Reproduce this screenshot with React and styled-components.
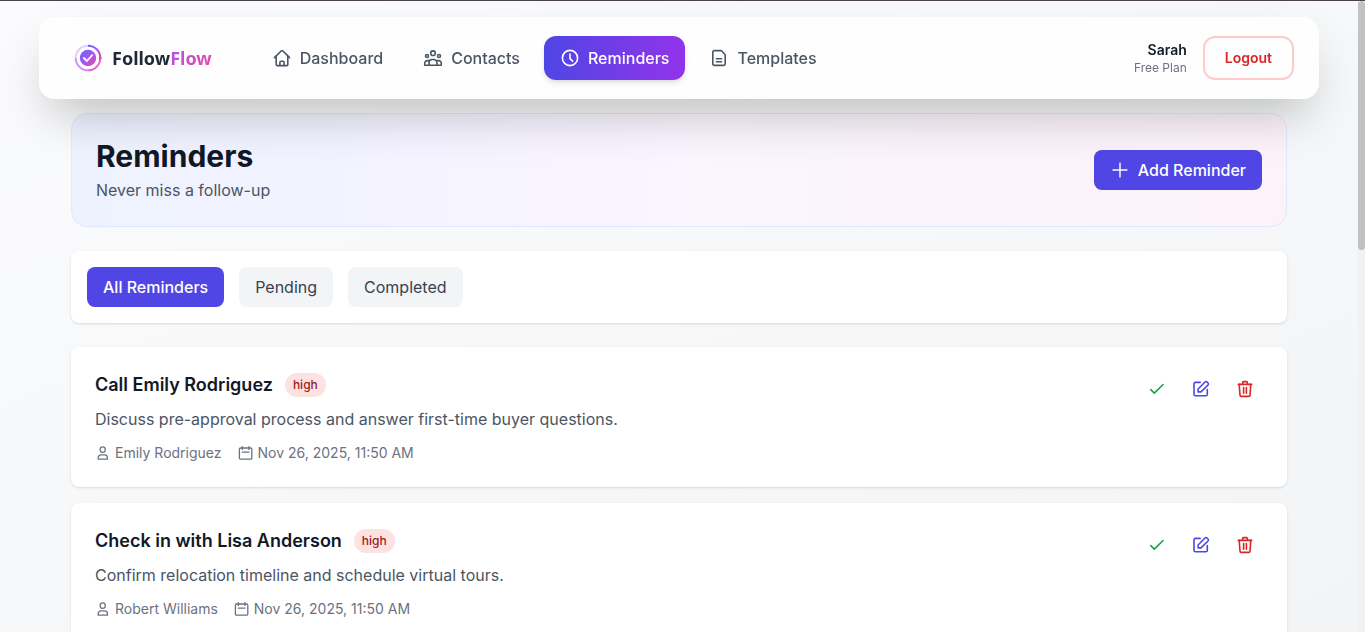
import React, { useState } from 'react';
import styled, { createGlobalStyle, css, ThemeProvider } from 'styled-components';

const theme = {
  font: "Inter, 'Liberation Sans', sans-serif",
  clr: {
    primary: '#4f46e5',
    purple: '#9333ea',
    danger: '#dc2626',
    success: '#16a34a',
    gray: {
      100: '#f3f4f6',
      500: '#6b7280',
      600: '#4b5563',
      700: '#374151',
      900: '#111827',
    },
  },
};

const GlobalStyle = createGlobalStyle`
  *,
  *::before,
  *::after {
    box-sizing: border-box;
  }

  body {
    margin: 0;
    font-family: ${theme.font};
    font-size: 16px;
    line-height: 24px;
    color: ${theme.clr.gray[900]};
    -webkit-font-smoothing: antialiased;
  }

  h1, h2, p, ul {
    margin: 0;
    padding: 0;
  }

  button {
    font-family: inherit;
    cursor: pointer;
  }
`;

/* Layout */

const Screen = styled.div`
  display: flex;
  height: 100vh;
  overflow: hidden;
  border-top: 1px solid #4b404e;
  background: linear-gradient(to bottom right, #fbfbfd, #f8f9fb 30%, #f3f4f6);
`;

const Viewport = styled.div`
  flex: 1;
  min-width: 0;
  overflow-y: auto;
  scrollbar-width: none;
`;

const ScrollTrack = styled.div`
  width: 7px;
  background-color: #f1f1f1;
`;

const ScrollThumb = styled.div`
  height: 249px;
  border-radius: 4px;
  background-color: #c1c1c1;
`;

const Main = styled.main`
  display: flex;
  flex-direction: column;
  gap: 24px;
  max-width: 1280px;
  margin: 0 auto;
  padding: 14px 32px 32px;
`;

/* Header */

const Header = styled.header`
  position: relative;
  z-index: 1;
  display: flex;
  align-items: center;
  gap: 44px;
  max-width: 1280px;
  margin: 16px auto 0;
  padding: 16px 24px;
  border: 1px solid rgba(255, 255, 255, 0.2);
  border-radius: 16px;
  background-color: rgba(255, 255, 255, 0.8);
  box-shadow: 0 25px 50px -12px rgba(0, 0, 0, 0.25);
  backdrop-filter: blur(24px);
`;

const Brand = styled.a`
  display: flex;
  align-items: center;
  font-family: 'Noto Sans', 'Open Sans', sans-serif;
  font-size: 18px;
  font-weight: 700;
  color: #1f2937;
  text-decoration: none;
`;

const BrandAccent = styled.span`
  background: linear-gradient(to bottom right, #a855f7, #ec4899);
  background-clip: text;
  color: transparent;
`;

const Nav = styled.nav`
  display: flex;
  flex: 1;
  gap: 8px;
`;

const NavLink = styled.a`
  display: flex;
  align-items: center;
  gap: 8px;
  padding: 10px 16px;
  border-radius: 12px;
  font-weight: 500;
  color: ${({ theme }) => theme.clr.gray[600]};
  text-decoration: none;

  ${({ $active, theme }) =>
    $active &&
    css`
      color: #fff;
      background: linear-gradient(to right, ${theme.clr.primary}, ${theme.clr.purple});
      box-shadow: 0 4px 6px -1px rgba(0, 0, 0, 0.1), 0 2px 4px -2px rgba(0, 0, 0, 0.1);
    `}
`;

const Account = styled.div`
  display: flex;
  align-items: center;
  gap: 16px;
`;

const User = styled.div`
  text-align: right;
`;

const UserName = styled.p`
  font-size: 14px;
  line-height: 20px;
  font-weight: 600;
`;

const UserPlan = styled.p`
  font-size: 12px;
  line-height: 16px;
  color: ${({ theme }) => theme.clr.gray[500]};
`;

const LogoutButton = styled.button`
  padding: 10px 20px;
  border: 2px solid #fecaca;
  border-radius: 12px;
  background: none;
  font-size: 14px;
  line-height: 20px;
  font-weight: 600;
  color: ${({ theme }) => theme.clr.danger};
`;

/* Page banner */

const Banner = styled.section`
  display: flex;
  align-items: center;
  justify-content: space-between;
  padding: 24px;
  border: 1px solid #e0e7ff;
  border-radius: 16px;
  background: linear-gradient(to right, #eef2ff, #faf5ff, #fdf2f8);
`;

const Title = styled.h1`
  margin-bottom: 4px;
  font-size: 30px;
  line-height: 36px;
  font-weight: 700;
`;

const Subtitle = styled.p`
  color: ${({ theme }) => theme.clr.gray[600]};
`;

const Button = styled.button`
  display: flex;
  align-items: center;
  gap: 8px;
  padding: 8px 16px;
  border: 0;
  border-radius: 8px;
  font-size: 16px;
  line-height: 24px;
  font-weight: ${({ $muted }) => ($muted ? 400 : 500)};
  color: ${({ $muted, theme }) => ($muted ? theme.clr.gray[700] : '#fff')};
  background-color: ${({ $muted, theme }) => ($muted ? theme.clr.gray[100] : theme.clr.primary)};
`;

/* Cards */

const cardStyles = css`
  border-radius: 8px;
  background-color: #fff;
  box-shadow: 0 1px 3px rgba(0, 0, 0, 0.1), 0 1px 2px -1px rgba(0, 0, 0, 0.1);
`;

const Filters = styled.div`
  display: flex;
  gap: 15px;
  padding: 16px;
  ${cardStyles}
`;

const List = styled.ul`
  display: flex;
  flex-direction: column;
  gap: 16px;
  list-style: none;
`;

const Card = styled.li`
  display: flex;
  align-items: flex-start;
  justify-content: space-between;
  padding: 24px;
  ${cardStyles}
`;

const CardHeader = styled.div`
  display: flex;
  align-items: center;
  gap: 12px;
  margin-bottom: 8px;
`;

const CardTitle = styled.h2`
  font-size: 18px;
  line-height: 28px;
  font-weight: 600;
`;

const Badge = styled.span`
  padding: 4px 8px;
  border-radius: 12px;
  font-size: 12px;
  line-height: 16px;
  font-weight: 500;
  color: #991b1b;
  background-color: #fee2e2;
`;

const Description = styled.p`
  margin-bottom: 12px;
  color: ${({ theme }) => theme.clr.gray[600]};
`;

const Meta = styled.div`
  display: flex;
  gap: 16px;
  font-size: 14px;
  line-height: 20px;
  color: ${({ theme }) => theme.clr.gray[500]};
`;

const MetaItem = styled.span`
  display: flex;
  align-items: center;
  gap: 4px;
`;

const Actions = styled.div`
  display: flex;
  gap: 8px;
`;

const IconButton = styled.button`
  display: flex;
  padding: 8px;
  border: 0;
  border-radius: 8px;
  background: none;
  color: ${({ $color, theme }) => theme.clr[$color]};
`;

/* Icons */

const Svg = styled.svg`
  display: block;
  flex-shrink: 0;
  fill: none;
  stroke: currentColor;
  stroke-width: ${({ $stroke }) => $stroke || 1.6};
  stroke-linecap: round;
  stroke-linejoin: round;
`;

const Icon = ({ size = 20, stroke, children }) => (
  <Svg width={size} height={size} viewBox={`0 0 ${size} ${size}`} $stroke={stroke} aria-hidden='true'>
    {children}
  </Svg>
);

const HomeIcon = () => (
  <Icon>
    <path d='M2.4 9.6 9.4 2.8a.9.9 0 0 1 1.2 0l7 6.8' />
    <path d='M4.2 8.2v8.3a1.1 1.1 0 0 0 1.1 1.1h9.4a1.1 1.1 0 0 0 1.1-1.1V8.2' />
    <path d='M7.9 17.4v-2.8a1.3 1.3 0 0 1 1.3-1.3h1.6a1.3 1.3 0 0 1 1.3 1.3v2.8' />
  </Icon>
);

const UsersIcon = () => (
  <Icon>
    <circle cx='10' cy='5.2' r='2.3' />
    <circle cx='4' cy='8' r='1.5' />
    <circle cx='16' cy='8' r='1.5' />
    <path d='M6 17.3v-2.5a3.3 3.3 0 0 1 3.3-3.3h1.4a3.3 3.3 0 0 1 3.3 3.3v2.5z' />
    <path d='M6 17.3H1.7v-2a2.7 2.7 0 0 1 2.7-2.7h1.8M14 17.3h4.3v-2a2.7 2.7 0 0 0-2.7-2.7h-1.8' />
  </Icon>
);

const ClockIcon = () => (
  <Icon>
    <circle cx='10' cy='10' r='7.6' />
    <path d='M10 6v4.2a1 1 0 0 0 .3.7l2.4 2.4' />
  </Icon>
);

const DocumentIcon = () => (
  <Icon>
    <path d='M11.8 2.6H5.4a1.6 1.6 0 0 0-1.6 1.6v11.6a1.6 1.6 0 0 0 1.6 1.6h9.2a1.6 1.6 0 0 0 1.6-1.6V7.2a1.4 1.4 0 0 0-.4-1l-3-3.2a1.4 1.4 0 0 0-1-.4z' />
    <path d='M7.4 10.7h5.2M7.4 13.7h5.2' />
  </Icon>
);

const PlusIcon = () => (
  <Icon stroke={1.4}>
    <path d='M10 3v14M3 10h14' />
  </Icon>
);

const CheckIcon = () => (
  <Icon>
    <path d='m3.8 10.6 3.5 3.5 8.8-8.6' />
  </Icon>
);

const EditIcon = () => (
  <Icon>
    <path d='M9.2 3.4H4.3A1.3 1.3 0 0 0 3 4.7v10.7a1.3 1.3 0 0 0 1.3 1.3H15a1.3 1.3 0 0 0 1.3-1.3v-4.9' />
    <path d='M7.1 12.9V10l6.9-7a1.4 1.4 0 0 1 2 0l1 1a1.4 1.4 0 0 1 0 2L10 12.9z' />
  </Icon>
);

const TrashIcon = () => (
  <Icon>
    <path d='M3.3 5.4h13.4M7.6 5.2V3.5a.9.9 0 0 1 .9-.9h3a.9.9 0 0 1 .9.9v1.7' />
    <path d='m4.2 5.4.8 10.9a1.2 1.2 0 0 0 1.2 1.1h7.6a1.2 1.2 0 0 0 1.2-1.1l.8-10.9M8.6 8.6v5.6M11.4 8.6v5.6' />
  </Icon>
);

const PersonIcon = () => (
  <Icon size={16} stroke={1.3}>
    <rect x='5.2' y='1.8' width='5' height='5.6' rx='2.4' />
    <path d='M3.2 14.2v-1.5a2.8 2.8 0 0 1 2.8-2.8h3.6a2.8 2.8 0 0 1 2.8 2.8v1.5z' />
  </Icon>
);

const CalendarIcon = () => (
  <Icon size={16} stroke={1.3}>
    <rect x='1.4' y='3' width='12.4' height='11.2' rx='1.2' />
    <path d='M4.3 1.6v2.8M10.9 1.6v2.8M4.3 7.2h6.6' />
  </Icon>
);

const Logo = () => (
  <svg width='48' height='48' viewBox='0 0 48 48' fill='none' aria-hidden='true'>
    <defs>
      <linearGradient id='brand' x1='16' y1='16' x2='32' y2='32' gradientUnits='userSpaceOnUse'>
        <stop stopColor='#6366f1' />
        <stop offset='0.5' stopColor='#a855f7' />
        <stop offset='1' stopColor='#ec4899' />
      </linearGradient>
      <linearGradient id='ring' x1='24' y1='11' x2='37' y2='26' gradientUnits='userSpaceOnUse'>
        <stop stopColor='#6366f1' />
        <stop offset='0.5' stopColor='#a855f7' />
        <stop offset='1' stopColor='#ec4899' />
      </linearGradient>
    </defs>
    <path d='M24 11.7A12.3 12.3 0 0 0 11.7 24' stroke='#a855f7' strokeWidth='2' opacity='0.3' />
    <path d='M11.7 24A12.3 12.3 0 0 0 24 36.3' stroke='#a855f7' strokeWidth='2' opacity='0.6' />
    <path d='M24 11.7A12.3 12.3 0 0 1 36.3 24' stroke='url(#ring)' strokeWidth='2' />
    <path d='M36.3 24A12.3 12.3 0 0 1 24 36.3' stroke='#d946c4' strokeWidth='2' opacity='0.8' />
    <path d='m35 21.8 3.2 2.2-3.2 2.4z' fill='#ec4899' />
    <circle cx='24' cy='24' r='8.2' fill='url(#brand)' />
    <path d='m19.8 24 3.2 3 5.2-5.8' stroke='#fff' strokeWidth='1.8' strokeLinecap='round' strokeLinejoin='round' />
  </svg>
);

const navItems = [
  { label: 'Dashboard', icon: HomeIcon },
  { label: 'Contacts', icon: UsersIcon },
  { label: 'Reminders', icon: ClockIcon },
  { label: 'Templates', icon: DocumentIcon },
];

const filters = ['All Reminders', 'Pending', 'Completed'];

const reminders = [
  {
    title: 'Call Emily Rodriguez',
    priority: 'high',
    description: 'Discuss pre-approval process and answer first-time buyer questions.',
    contact: 'Emily Rodriguez',
    date: 'Nov 26, 2025, 11:50 AM',
  },
  {
    title: 'Check in with Lisa Anderson',
    priority: 'high',
    description: 'Confirm relocation timeline and schedule virtual tours.',
    contact: 'Robert Williams',
    date: 'Nov 26, 2025, 11:50 AM',
  },
];

const Reminder = ({ title, priority, description, contact, date }) => (
  <Card>
    <div>
      <CardHeader>
        <CardTitle>{title}</CardTitle>
        <Badge>{priority}</Badge>
      </CardHeader>
      <Description>{description}</Description>
      <Meta>
        <MetaItem>
          <PersonIcon />
          {contact}
        </MetaItem>
        <MetaItem>
          <CalendarIcon />
          {date}
        </MetaItem>
      </Meta>
    </div>
    <Actions>
      <IconButton $color='success' aria-label='Mark complete'>
        <CheckIcon />
      </IconButton>
      <IconButton $color='primary' aria-label='Edit'>
        <EditIcon />
      </IconButton>
      <IconButton $color='danger' aria-label='Delete'>
        <TrashIcon />
      </IconButton>
    </Actions>
  </Card>
);

const App = () => {
  const [filter, setFilter] = useState('All Reminders');

  return (
    <ThemeProvider theme={theme}>
      <GlobalStyle />
      <Screen>
        <Viewport>
          <Header>
            <Brand href='#'>
              <Logo />
              <span>
                Follow<BrandAccent>Flow</BrandAccent>
              </span>
            </Brand>
            <Nav>
              {navItems.map(({ label, icon: ItemIcon }) => (
                <NavLink key={label} href='#' $active={label === 'Reminders'}>
                  <ItemIcon />
                  {label}
                </NavLink>
              ))}
            </Nav>
            <Account>
              <User>
                <UserName>Sarah</UserName>
                <UserPlan>Free Plan</UserPlan>
              </User>
              <LogoutButton>Logout</LogoutButton>
            </Account>
          </Header>

          <Main>
            <Banner>
              <div>
                <Title>Reminders</Title>
                <Subtitle>Never miss a follow-up</Subtitle>
              </div>
              <Button>
                <PlusIcon />
                Add Reminder
              </Button>
            </Banner>

            <Filters>
              {filters.map((name) => (
                <Button key={name} $muted={name !== filter} onClick={() => setFilter(name)}>
                  {name}
                </Button>
              ))}
            </Filters>

            <List>
              {reminders.map((reminder) => (
                <Reminder key={reminder.title} {...reminder} />
              ))}
            </List>
          </Main>
        </Viewport>
        <ScrollTrack>
          <ScrollThumb />
        </ScrollTrack>
      </Screen>
    </ThemeProvider>
  );
};

export default App;
